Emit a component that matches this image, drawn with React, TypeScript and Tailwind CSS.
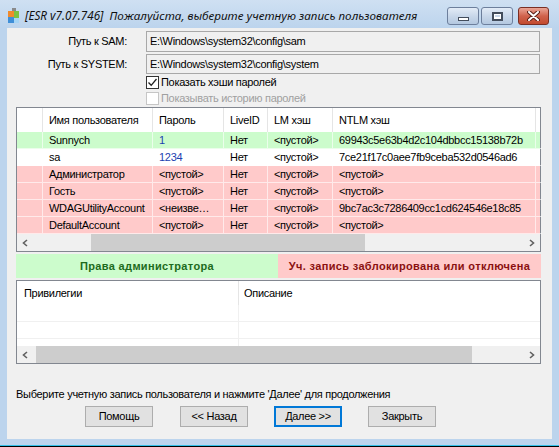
import React from "react"

type Row = {
  name: string
  pass: string
  live: string
  lm: string
  ntlm: string
  bg: string
}

const rows: Row[] = [
  { name: "Sunnych", pass: "1", live: "Нет", lm: "<пустой>", ntlm: "69943c5e63b4d2c104dbbcc15138b72b", bg: "bg-[#ccfccc]" },
  { name: "sa", pass: "1234", live: "Нет", lm: "<пустой>", ntlm: "7ce21f17c0aee7fb9ceba532d0546ad6", bg: "bg-white" },
  { name: "Администратор", pass: "<пустой>", live: "Нет", lm: "<пустой>", ntlm: "<пустой>", bg: "bg-[#ffcaca]" },
  { name: "Гость", pass: "<пустой>", live: "Нет", lm: "<пустой>", ntlm: "<пустой>", bg: "bg-[#ffcaca]" },
  { name: "WDAGUtilityAccount", pass: "<неизве…", live: "Нет", lm: "<пустой>", ntlm: "9bc7ac3c7286409cc1cd624546e18c85", bg: "bg-[#ffcaca]" },
  { name: "DefaultAccount", pass: "<пустой>", live: "Нет", lm: "<пустой>", ntlm: "<пустой>", bg: "bg-[#ffcaca]" },
]

const cols = "grid grid-cols-[26px_110px_71px_44px_65px_203px_1fr]"

function AppIcon() {
  return (
    <svg width="14" height="16" viewBox="0 0 14 16">
      <rect x="5" y="0" width="4" height="3" fill="#8a8a8a" />
      <rect x="1" y="3" width="6" height="6" fill="#f08a2c" />
      <rect x="7" y="3" width="5" height="7" fill="#7cc242" />
      <rect x="1" y="9" width="6" height="6" fill="#3f8fd8" />
      <rect x="7" y="10" width="5" height="5" fill="#a6d5f5" />
    </svg>
  )
}

function CaptionButton({ kind }: { kind: "min" | "max" | "close" }) {
  if (kind === "close") {
    return (
      <div className="w-[31px] h-[18px] rounded-[3px] border border-[#7a2f24] bg-gradient-to-b from-[#e9a596] via-[#d0624c] to-[#c24a2e] flex items-center justify-center">
        <svg width="13" height="10" viewBox="0 0 13 10">
          <path d="M2 1 L11 9 M11 1 L2 9" stroke="#5a2018" strokeWidth="4" strokeLinecap="round" />
          <path d="M2 1 L11 9 M11 1 L2 9" stroke="#ffffff" strokeWidth="2" strokeLinecap="round" />
        </svg>
      </div>
    )
  }
  return (
    <div className="w-[32px] h-[18px] rounded-[3px] border border-[#6d7f9c] bg-gradient-to-b from-[#e3ecf7] via-[#c9d8ea] to-[#b4c8e0] flex items-center justify-center">
      {kind === "min" ? (
        <div className="w-[11px] h-[4px] mt-[5px] bg-white border border-[#434d5c]" />
      ) : (
        <div className="w-[11px] h-[9px] border-[2px] border-[#434d5c] bg-white flex items-center justify-center">
          <div className="w-[5px] h-[2px] bg-[#c9d8ea]" />
        </div>
      )}
    </div>
  )
}

function HScroll({ thumbLeft, thumbWidth }: { thumbLeft: number; thumbWidth: number }) {
  return (
    <div className="relative h-[17px] bg-[#f0f0f0] flex items-center justify-between px-[4px]">
      <svg width="8" height="8" viewBox="0 0 8 8">
        <path d="M6 1 L2.5 4 L6 7" stroke="#606060" strokeWidth="1.6" fill="none" />
      </svg>
      <div className="absolute top-0 h-[17px] bg-[#cdcdcd]" style={{ left: thumbLeft, width: thumbWidth }} />
      <svg width="8" height="8" viewBox="0 0 8 8">
        <path d="M2 1 L5.5 4 L2 7" stroke="#606060" strokeWidth="1.6" fill="none" />
      </svg>
    </div>
  )
}

function Checkbox({ checked, disabled, label }: { checked?: boolean; disabled?: boolean; label: string }) {
  return (
    <div className="h-[16px] flex items-center gap-[2px] pl-[139px]">
      <div
        className={`w-[13px] h-[13px] border bg-white flex items-center justify-center ${
          disabled ? "border-[#c6c6c6]" : "border-[#333333]"
        }`}
      >
        {checked && (
          <svg width="11" height="11" viewBox="0 0 11 11">
            <path d="M1.5 5.5 L4.2 8.3 L9.5 2" stroke="#202020" strokeWidth="1.3" fill="none" />
          </svg>
        )}
      </div>
      <span className={disabled ? "text-[#a0a0a0]" : "text-black"}>{label}</span>
    </div>
  )
}

function Btn({ label, focused }: { label: string; focused?: boolean }) {
  return (
    <div
      className={`w-[68px] h-[21px] flex items-center justify-center bg-[#e1e1e1] ${
        focused ? "border-2 border-[#0078d7]" : "border border-[#adadad]"
      }`}
    >
      {label}
    </div>
  )
}

export default function App() {
  return (
    <div className="w-[559px] h-[447px] bg-[#bcd4ed] flex flex-col font-['Liberation_Sans',Arial,sans-serif] text-[11px] tracking-[-0.3px] text-black overflow-hidden">
      {/* title bar */}
      <div className="h-[28px] flex items-start bg-gradient-to-b from-[#cfe0f2] to-[#bcd4ed]">
        <div className="mt-[8px] ml-[7px]">
          <AppIcon />
        </div>
        <div className="mt-[7px] ml-[4px] text-[11.7px] tracking-normal italic font-['Noto_Sans',sans-serif] text-[#111]">
          [ESR v7.07.746]&nbsp; Пожалуйста, выберите учетную запись пользователя
        </div>
        <div className="ml-auto mr-[10px] mt-[7px] flex gap-[2px]">
          <CaptionButton kind="min" />
          <CaptionButton kind="max" />
          <div className="w-[1px]" />
          <CaptionButton kind="close" />
        </div>
      </div>

      {/* client area */}
      <div className="mx-[7px] h-[411px] bg-[#f0f0f0] flex flex-col">
        <div className="mt-[3px] flex items-center h-[21px]">
          <div className="w-[120px] text-right">Путь к SAM:</div>
          <div className="ml-[19px] w-[394px] h-[21px] border border-[#a8a8a8] bg-[#f0f0f0] flex items-center pl-[3px]">
            E:\Windows\system32\config\sam
          </div>
        </div>
        <div className="mt-[2px] flex items-center h-[20px]">
          <div className="w-[120px] text-right">Путь к SYSTEM:</div>
          <div className="ml-[19px] w-[394px] h-[20px] border border-[#a8a8a8] bg-[#f0f0f0] flex items-center pl-[3px]">
            E:\Windows\system32\config\system
          </div>
        </div>
        <Checkbox checked label="Показать хэши паролей" />
        <Checkbox disabled label="Показывать историю паролей" />

        {/* users table */}
        <div className="mt-[1px] ml-[9px] w-[525px] border border-[#828790] bg-white flex flex-col">
          <div className={`${cols} h-[24px]`}>
            {["", "Имя пользователя", "Пароль", "LiveID", "LM хэш", "NTLM хэш", ""].map((h, i) => (
              <div key={i} className={`flex items-center pl-[6px] ${i < 6 ? "border-r border-[#e5e5e5]" : ""}`}>
                {h}
              </div>
            ))}
          </div>
          {rows.map((r) => (
            <div key={r.name} className={`${cols} h-[17px] ${r.bg}`}>
              {["", r.name, r.pass, r.live, r.lm, r.ntlm, ""].map((c, i) => (
                <div
                  key={i}
                  className={`flex items-center pl-[6px] border-b border-white/60 whitespace-nowrap overflow-hidden ${
                    i < 6 ? "border-r" : ""
                  } ${i === 2 && (c === "1" || c === "1234") ? "text-[#1c3fb0]" : ""}`}
                >
                  {c}
                </div>
              ))}
            </div>
          ))}
          <HScroll thumbLeft={74} thumbWidth={274} />
        </div>

        {/* status */}
        <div className="mt-[2px] ml-[9px] w-[525px] h-[24px] flex font-bold tracking-[0.35px]">
          <div className="w-[262px] bg-[#ccfccc] text-[#1d6b1d] flex items-center justify-center">
            Права администратора
          </div>
          <div className="flex-1 bg-[#ffcaca] text-[#8a1010] flex items-center justify-center">
            Уч. запись заблокирована или отключена
          </div>
        </div>

        {/* privileges table */}
        <div className="mt-[2px] ml-[9px] w-[525px] h-[84px] border border-[#828790] bg-white flex flex-col">
          <div className="grid grid-cols-[222px_1fr] h-[24px]">
            <div className="flex items-center pl-[7px] border-r border-[#e5e5e5]">Привилегии</div>
            <div className="flex items-center pl-[5px]">Описание</div>
          </div>
          {[0, 1, 2].map((i) => (
            <div key={i} className={`grid grid-cols-[222px_1fr] ${i === 2 ? "h-[7px]" : "h-[17px] border-b border-[#f0f0f0]"}`}>
              <div className="border-r border-[#f0f0f0]" />
              <div />
            </div>
          ))}
          <HScroll thumbLeft={19} thumbWidth={436} />
        </div>

        <div className="mt-[24px] ml-[9px] h-[13px] leading-[13px]">
          Выберите учетную запись пользователя и нажмите 'Далее' для продолжения
        </div>
        <div className="mt-[5px] flex">
          <div className="ml-[78px]">
            <Btn label="Помощь" />
          </div>
          <div className="ml-[27px]">
            <Btn label="<< Назад" />
          </div>
          <div className="ml-[26px]">
            <Btn label="Далее >>" focused />
          </div>
          <div className="ml-[26px]">
            <Btn label="Закрыть" />
          </div>
        </div>
      </div>
      <div className="mt-auto h-[1px] bg-[#35c0e8]" />
      <div className="h-[1px] bg-black" />
    </div>
  )
}
